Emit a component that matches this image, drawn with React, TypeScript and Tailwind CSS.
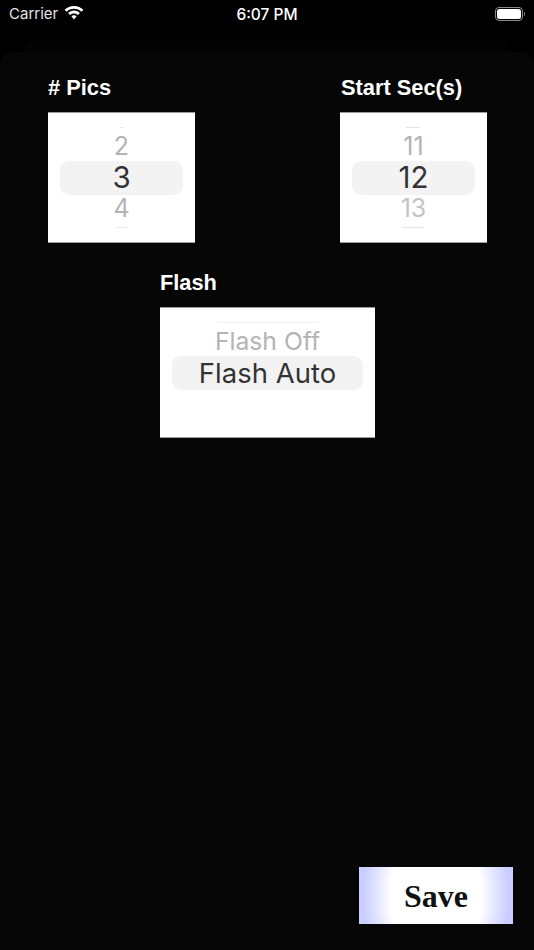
import React from "react";

type Item = { text: string; cls: string };

function Picker({ items, top, bottom }: { items: Item[]; top: string; bottom: string }) {
  return (
    <div className="relative w-[147px] h-[131px] bg-white border-y border-[#9a9a9a] flex flex-col items-center justify-center font-['Inter',sans-serif]">
      <div className="absolute top-[48px] left-[12px] right-[12px] h-[34px] rounded-[9px] bg-[#f3f3f3]" />
      <div className={`absolute top-[14px] h-[1px] bg-[#e4e4e4] ${top}`} />
      <div className={`absolute bottom-[14px] h-[1px] bg-[#e4e4e4] ${bottom}`} />
      <div className="relative flex flex-col items-center">
        {items.map((it, i) => (
          <div key={i} className={`h-[31px] flex items-center justify-center leading-none ${it.cls}`}>
            {it.text}
          </div>
        ))}
      </div>
    </div>
  );
}

function Wifi() {
  return (
    <svg width="20" height="14" viewBox="0 0 20 14" fill="#fff">
      <path d="M10 0C6.3 0 3 1.4.6 3.8l1.9 2C4.4 3.9 7.1 2.7 10 2.7s5.6 1.2 7.5 3.1l1.9-2C17 1.4 13.7 0 10 0z" />
      <path d="M10 4.6c-2.3 0-4.4.9-5.9 2.4l1.9 2c1-1 2.4-1.6 4-1.6s3 .6 4 1.6l1.9-2C14.4 5.5 12.3 4.6 10 4.6z" />
      <path d="M10 9.3c-1 0-1.9.4-2.6 1l2.6 3.2 2.6-3.2c-.7-.6-1.6-1-2.6-1z" />
    </svg>
  );
}

export default function App() {
  const label = "text-white font-bold text-[21.8px] leading-none font-['Liberation_Sans',Arial,sans-serif]";
  const faint = "text-[#b4b4b4] text-[25px]";
  const faint2 = "text-[#c4c4c4] text-[25px]";
  const sel = "text-[#333333] text-[29.5px]";
  return (
    <div className="w-[534px] h-[950px] bg-black flex flex-col overflow-hidden">
      <div className="h-[39px] shrink-0 relative flex items-start justify-between px-[9px] pt-[5px] text-white">
        <div className="flex items-center gap-[6px] h-[18px] -mt-[1px]">
          <span className="text-[#e4e4e4] text-[15px] leading-none font-['Inter',sans-serif]">Carrier</span>
          <Wifi />
        </div>
        <span className="absolute left-0 right-0 top-[6px] h-[18px] flex items-center justify-center text-[15.5px] font-medium leading-none font-['Inter',sans-serif]">
          6:07 PM
        </span>
        <div className="flex items-center h-[18px] gap-[1px]">
          <div className="w-[28px] h-[14px] rounded-[4px] border border-[#8a8a8a] p-[1px]">
            <div className="w-full h-full rounded-[2.5px] bg-white" />
          </div>
          <div className="w-[1.5px] h-[4px] bg-[#7a7a7a] rounded-r-sm" />
        </div>
      </div>
      <div className="h-[13px] mx-[26px] shrink-0 rounded-t-[10px] bg-[#030303]" />
      <div className="flex-1 rounded-t-[14px] bg-[#060606] flex flex-col pl-[48px] pr-[47px] pt-[25px] pb-[26px]">
        <div className="flex justify-between">
          <div className="flex flex-col w-[147px]">
            <div className={`${label} h-[35px]`}>{"# Pics"}</div>
            <Picker
              top="left-[72px] w-[3px]"
              bottom="left-[69px] w-[10px]"
              items={[
                { text: "2", cls: faint },
                { text: "3", cls: sel },
                { text: "4", cls: faint },
              ]}
            />
          </div>
          <div className="flex flex-col w-[147px]">
            <div className={`${label} h-[35px] pl-[1px]`}>Start Sec(s)</div>
            <Picker
              top="left-[66px] w-[14px]"
              bottom="left-[62px] w-[22px]"
              items={[
                { text: "11", cls: faint },
                { text: "12", cls: sel },
                { text: "13", cls: faint2 },
              ]}
            />
          </div>
        </div>
        <div className="ml-[112px] mt-[29px] w-[215px] flex flex-col">
          <div className={`${label} h-[35px]`}>Flash</div>
          <div className="relative h-[131px] bg-white border-y border-[#9a9a9a] flex flex-col items-center font-['Inter',sans-serif]">
            <div className="absolute top-[48px] left-[12px] right-[12px] h-[34px] rounded-[9px] bg-[#f3f3f3]" />
            <div className="absolute top-[14px] left-[58px] w-[100px] h-[1px] bg-[#f0f0f0]" />
            <div className="relative h-[31px] mt-[18px] flex items-center text-[#b4b4b4] text-[24.7px] leading-none">Flash Off</div>
            <div className="relative h-[32px] pt-[1px] flex items-center text-[#333333] text-[27.5px] leading-none">Flash Auto</div>
          </div>
        </div>
        <div className="mt-auto flex justify-end mr-[-26px]">
          <button className="w-[154px] h-[57px] bg-[radial-gradient(ellipse_78px_120px_at_center,#ffffff_58%,#c9cdff_94%)] flex items-center justify-center pt-[1px] text-[#111111] font-bold text-[32px] leading-none font-['Liberation_Serif',serif]">
            Save
          </button>
        </div>
      </div>
    </div>
  );
}
